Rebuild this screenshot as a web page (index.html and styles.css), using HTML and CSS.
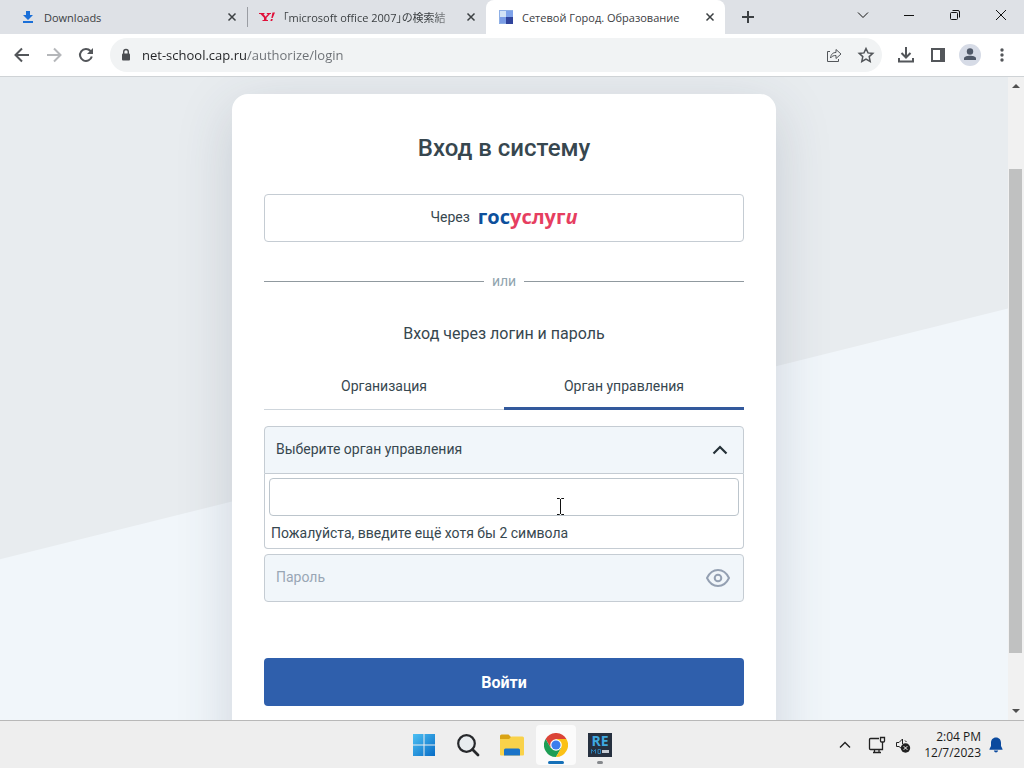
FILE: index.html
```html
<!DOCTYPE html>
<html lang="ru">
<head>
  <meta charset="UTF-8" />
  <meta name="viewport" content="width=device-width, initial-scale=1.0"/>
  <title>Сетевой Город. Образование</title>
  <link rel="stylesheet" href="styles.css">
</head>
<body>
  <header class="tabstrip">
    <div class="tab">
      <svg width="16" height="16" viewBox="0 0 16 16"><path fill="#1a6fd8" d="M6 2h4v4h3l-5 5-5-5h3zM3 12h10v2H3z"/></svg>
      <span class="tab-title">Downloads</span>
      <button class="tab-close" aria-label="Close"><svg width="16" height="16" viewBox="0 0 16 16"><path d="M4.500 4.500l7 7M11.500 4.500l-7 7"/></svg></button>
    </div>
    <div class="tab divided">
      <svg width="16" height="16" viewBox="0 0 16 16"><path fill="#e0103a" d="M0 4h5.500v1H4.500l2 2.700L9 5H7.800V4H12v1h-1L7.500 8.800V11H9v1H3.500v-1H5V8.800L1.500 5H0zM13.500 3.500H16L13.700 9h-1.400zM12 10h1.800l-.6 2h-1.800z"/></svg>
      <span class="tab-title faded">「microsoft office 2007」の検索結</span>
      <button class="tab-close" aria-label="Close"><svg width="16" height="16" viewBox="0 0 16 16"><path d="M4.500 4.500l7 7M11.500 4.500l-7 7"/></svg></button>
    </div>
    <div class="tab active">
      <svg width="16" height="16" viewBox="0 0 16 16"><path fill="#d3e3f6" d="M1 1h7v7H1z"/><path fill="#7fa3ea" d="M8 1h7v7H8z"/><path fill="#7b9de6" d="M1 8h7v7H1z"/><path fill="#30449c" d="M8 8h7v7H8z"/><path fill="none" stroke="#8fb0e6" d="M1.500 1v13.500H8M1 1.500h14"/></svg>
      <span class="tab-title">Сетевой Город. Образование</span>
      <button class="tab-close" aria-label="Close"><svg width="16" height="16" viewBox="0 0 16 16"><path d="M4.500 4.500l7 7M11.500 4.500l-7 7"/></svg></button>
    </div>
    <button class="new-tab" aria-label="New tab"><svg width="16" height="16" viewBox="0 0 16 16"><path d="M8 2v12M2 8h12"/></svg></button>
    <div class="window-controls">
      <button aria-label="Search tabs"><svg width="12" height="12" viewBox="0 0 12 12"><path d="M1 3.500l5 5 5-5"/></svg></button>
      <button aria-label="Minimize"><svg width="12" height="12" viewBox="0 0 12 12"><path d="M1 6.500h10"/></svg></button>
      <button aria-label="Restore"><svg width="12" height="12" viewBox="0 0 12 12"><rect x="1.500" y="3.500" width="7" height="7" rx="1"/><path d="M3.500 1.500H9a1.500 1.500 0 0 1 1.500 1.500v5.500"/></svg></button>
      <button aria-label="Close window"><svg width="12" height="12" viewBox="0 0 12 12"><path d="M1 1l10 10M11 1L1 11"/></svg></button>
    </div>
  </header>

  <nav class="toolbar">
    <button class="tool" aria-label="Back"><svg width="20" height="20" viewBox="0 0 20 20"><path d="M17 10H4M10 3.500L3.500 10l6.500 6.500"/></svg></button>
    <button class="tool" aria-label="Forward" disabled><svg width="20" height="20" viewBox="0 0 20 20"><path d="M3 10h13M10 3.500l6.500 6.500-6.500 6.500"/></svg></button>
    <button class="tool" aria-label="Reload"><svg width="20" height="20" viewBox="0 0 20 20"><path d="M15.800 11.500A6 6 0 1 1 14.500 6L16 7.500"/><path class="solid" d="M17 3v6h-6z"/></svg></button>
    <div class="omnibox">
      <svg width="16" height="16" viewBox="0 0 16 16"><rect x="4" y="6.500" width="8" height="7" rx="1" fill="#4a4d51"/><path d="M5.700 7V4.800a2.300 2.300 0 0 1 4.600 0V7" fill="none" stroke="#4a4d51" stroke-width="1.400"/></svg>
      <input class="url" type="text" aria-label="Address" value="net-school.cap.ru/authorize/login">
      <button class="tool thin" aria-label="Share"><svg width="18" height="18" viewBox="0 0 18 18"><path d="M5 5.500H2.500v10h11V13"/><path d="M5.500 12c.5-4 2.500-5.500 5.500-5.500V3.500L16 8l-5 4.500v-3c-2.500 0-4 .5-5.500 2.500z"/></svg></button>
      <button class="tool" aria-label="Bookmark"><svg width="18" height="18" viewBox="0 0 18 18"><path stroke-width="1.500" d="M9 2.500l2 4.400 4.800.5-3.600 3.200 1 4.800L9 13l-4.200 2.400 1-4.800-3.600-3.200 4.800-.5z"/></svg></button>
    </div>
    <button class="tool" aria-label="Downloads"><svg width="20" height="20" viewBox="0 0 20 20"><path d="M10 2v10M5.500 8l4.500 4.500L14.500 8M3 13v3.500h14V13"/></svg></button>
    <button class="tool" aria-label="Side panel"><svg width="20" height="20" viewBox="0 0 20 20"><path d="M4 4h12v12H4z"/><path class="solid" d="M12 3h5v14h-5z"/></svg></button>
    <button class="tool" aria-label="Profile"><svg width="22" height="22" viewBox="0 0 22 22"><circle cx="11" cy="11" r="11" fill="#d6dbe6"/><circle cx="11" cy="7.500" r="3.200" fill="#4f5868"/><path fill="#4f5868" d="M5 16v-1.500C5 12.500 8 11.700 11 11.700s6 .8 6 2.800V16z"/></svg></button>
    <button class="tool" aria-label="Menu"><svg width="20" height="20" viewBox="0 0 20 20"><g class="solid"><circle cx="10" cy="5" r="1.700"/><circle cx="10" cy="10" r="1.700"/><circle cx="10" cy="15" r="1.700"/></g></svg></button>
  </nav>

  <div class="viewport">
    <main class="page">
      <form class="card">
        <h1>Вход в систему</h1>
        <button type="button" class="gos-button">Через <span class="gos-logo">гос<span class="red">услуг<i>и</i></span></span></button>
        <div class="or">или</div>
        <h2>Вход через логин и пароль</h2>
        <div class="login-tabs" role="tablist">
          <button type="button" role="tab">Организация</button>
          <button type="button" role="tab" aria-selected="true">Орган управления</button>
        </div>
        <div class="field select-field">
          <select aria-label="Орган управления">
            <option>Выберите орган управления</option>
          </select>
          <svg width="16" height="16" viewBox="0 0 16 16"><path d="M1.500 11.500L8 5l6.500 6.500" fill="none" stroke="#263238" stroke-width="2.200"/></svg>
        </div>
        <div class="dropdown">
          <input type="text" id="org-search">
          <label for="org-search">Пожалуйста, введите ещё хотя бы 2 символа</label>
        </div>
        <div class="field password-field">
          <input type="password" placeholder="Пароль" aria-label="Пароль">
          <button type="button" aria-label="Показать пароль"><svg width="24" height="20" viewBox="0 0 24 20"><path d="M1 10C3.500 4.800 7.500 2 12 2s8.500 2.800 11 8c-2.500 5.200-6.500 8-11 8S3.500 15.200 1 10z"/><circle cx="12" cy="10" r="3.300"/></svg></button>
        </div>
        <button type="submit" class="submit">Войти</button>
      </form>
      <svg class="pointer" width="9" height="17" viewBox="0 0 9 17"><path d="M1 .5h2.500l1 1 1-1H8M4.500 1v15M1 16.500h2.500l1-1 1 1H8" fill="none" stroke="#111"/></svg>
    </main>
    <div class="scrollbar">
      <svg width="16" height="17" viewBox="0 0 16 17"><path d="M4 11l4-4 4 4z"/></svg>
      <div class="gap-above"></div>
      <div class="thumb"></div>
      <div class="gap-below"></div>
      <svg width="16" height="17" viewBox="0 0 16 17"><path d="M4 6l4 4 4-4z"/></svg>
    </div>
  </div>

  <footer class="taskbar">
    <div class="apps">
      <button aria-label="Start"><svg width="24" height="24" viewBox="0 0 24 24"><defs><linearGradient id="win" x1="0" y1="0" x2="24" y2="24" gradientUnits="userSpaceOnUse"><stop offset="0" stop-color="#50c4f5"/><stop offset="1" stop-color="#0468c4"/></linearGradient></defs><path fill="url(#win)" d="M1 1h10.500v10.500H1zM12.500 1H23v10.500H12.500zM1 12.500h10.500V23H1zM12.500 12.500H23V23H12.500z"/></svg></button>
      <button aria-label="Search"><svg width="24" height="24" viewBox="0 0 24 24"><circle cx="10.500" cy="10.500" r="8.300" fill="#e8ecef" stroke="#26282b" stroke-width="2.200"/><path d="M16.500 16.500l5.500 5.500" stroke="#26282b" stroke-width="2.800" stroke-linecap="round"/></svg></button>
      <button aria-label="Explorer"><svg width="26" height="24" viewBox="0 0 26 24"><path fill="#d9a315" d="M1 3q0-1.500 1.500-1.500h7L12 4v6H1z"/><path fill="#f9d24a" d="M1 6h9l2.500-2.500h11Q25 3.500 25 5v16.500q0 1-1 1H2q-1 0-1-1z"/><path fill="#1a73c8" d="M5 22.500V17q0-1.500 1.500-1.500h13q1.500 0 1.500 1.500v5.500z"/></svg></button>
      <button class="current" aria-label="Chrome"><svg width="24" height="24" viewBox="0 0 24 24"><path fill="#db4437" d="M12 6h10.400A12 12 0 0 0 1.600 6l5.200 9z"/><path fill="#1e9e55" d="M6.800 15L1.600 6A12 12 0 0 0 12 24l5.200-9z"/><path fill="#fbc116" d="M17.200 15L12 24A12 12 0 0 0 22.400 6H12z"/><circle cx="12" cy="12" r="5.800" fill="#fff"/><circle cx="12" cy="12" r="4.600" fill="#3b7ded"/></svg></button>
      <button class="running" aria-label="Remote"><span class="re-icon"><b>RE</b><svg width="18" height="5" viewBox="0 0 18 5"><path d="M.5 4.500v-4l2 2 2-2v4M7 .5h2.500v4H7z" fill="none" stroke="#2c7fb5"/><path d="M11 1h7v3h-7z" fill="#c5cbd3"/></svg></span></button>
    </div>
    <div class="tray">
      <button aria-label="Hidden icons"><svg width="12" height="12" viewBox="0 0 12 12"><path d="M1 8.500l5-5 5 5" fill="none" stroke="#222" stroke-width="1.400"/></svg></button>
      <button aria-label="Network"><svg width="18" height="18" viewBox="0 0 18 18"><path d="M11 2.500H2.500Q1.500 2.500 1.500 3.500v9q0 1 1 1h12V8M5 16.500h8M6.500 14v2M11 14v2M12.500 1.500h4V5q0 1-1 1h-2q-1 0-1-1zM14.500 6v7.500" fill="none" stroke="#222" stroke-width="1.300"/></svg></button>
      <button aria-label="Volume muted"><svg width="18" height="18" viewBox="0 0 18 18"><path d="M7.500 12.500L5 10.500H2.500v-4H5L8.500 3v5M11 4.500l1.500 1.500" fill="none" stroke="#222"/><circle cx="11.500" cy="12" r="4.700" fill="#222"/><path d="M9.700 10.200l3.600 3.600M13.300 10.200l-3.600 3.600" stroke="#fff"/></svg></button>
      <div class="clock"><time>2:04 PM</time><time>12/7/2023</time></div>
      <button aria-label="Notifications"><svg width="16" height="18" viewBox="0 0 16 18"><path fill="#0b4a9e" d="M8 1.500c3.200 0 5 2.300 5 5.200V10l1.500 3v.8h-13V13L3 10V6.700c0-2.900 1.800-5.200 5-5.200zM5.800 14.600h4.400Q9.600 16.500 8 16.500t-2.200-1.900z"/></svg></button>
    </div>
  </footer>
</body>
</html>
```
FILE: styles.css
```css
* {
  box-sizing: border-box;
}
body {
  margin: 0;
  height: 100vh;
  display: flex;
  flex-direction: column;
  overflow: hidden;
  font-family: "Open Sans", "Noto Sans CJK JP", sans-serif;
  font-size: 12px;
  color: #3c4043;
}
button {
  display: flex;
  align-items: center;
  justify-content: center;
  padding: 0;
  border: 0;
  background: none;
  font: inherit;
  color: inherit;
}
svg {
  flex: none;
}

/* browser tabs */
.tabstrip {
  display: flex;
  flex: none;
  height: 34px;
  padding-left: 8px;
  background: #dee1e6;
}
.tab {
  display: flex;
  flex: 0 1 239px;
  align-items: center;
  gap: 8px;
  min-width: 0;
  padding: 0 7px 0 12px;
}
.tab.divided {
  background: linear-gradient(#9a9da3, #9a9da3) 0 50% / 1px 20px no-repeat;
}
.tab.active {
  background: #fff;
  border-radius: 8px 8px 0 0;
}
.tab-title {
  flex: 1;
  overflow: hidden;
  font-size: 11px;
  white-space: nowrap;
}
.tab-title.faded {
  font-feature-settings: "palt";
  mask-image: linear-gradient(to right, #000 85%, rgba(0, 0, 0, 0.3));
}
.tab-close svg {
  fill: none;
  stroke: #3c4043;
  stroke-width: 1.5;
}
.new-tab {
  width: 46px;
}
.new-tab svg {
  stroke: #3c4043;
  stroke-width: 2;
}
.window-controls {
  display: flex;
  height: 29px;
  margin-left: auto;
}
.window-controls button {
  width: 46px;
}
.window-controls svg {
  fill: none;
  stroke: #111;
}

/* toolbar */
.toolbar {
  display: flex;
  flex: none;
  align-items: center;
  height: 43px;
  padding: 0 6px;
  background: #fff;
  border-bottom: 1px solid #cfd3d6;
}
.tool {
  width: 32px;
  height: 32px;
}
.tool svg {
  fill: none;
  stroke: #53565a;
  stroke-width: 2;
}
.tool.thin svg {
  stroke-width: 1;
}
.tool:disabled svg {
  stroke: #b5b7ba;
}
.tool .solid {
  fill: #53565a;
  stroke: none;
}
.tool circle {
  stroke: none;
}
.tool path[fill] {
  stroke: none;
}
.omnibox {
  display: flex;
  flex: 1;
  align-items: center;
  height: 34px;
  margin: 0 8px;
  padding-left: 8px;
  background: #f1f3f4;
  border-radius: 17px;
}
.url {
  flex: 1;
  min-width: 0;
  margin-left: 8px;
  padding: 0;
  border: 0;
  outline: 0;
  font: 13px "Open Sans", sans-serif;
  /* host is dark, path is grey */
  background: linear-gradient(to right, #202124 105px, #6a6e73 105px);
  background-clip: text;
  -webkit-text-fill-color: transparent;
}

/* page */
.viewport {
  display: flex;
  flex: 1;
  min-height: 0;
}
.page {
  position: relative;
  flex: 1;
  overflow: hidden;
  padding-top: 17px;
  background: #f1f6fa;
  font-family: Roboto, sans-serif;
  font-size: 14px;
}
.page::before {
  content: "";
  position: absolute;
  inset: 0;
  background: #e8ecef;
  clip-path: polygon(0 0, 100% 0, 100% 36%, 0 75%);
}
.card {
  position: relative;
  max-width: 544px;
  margin: 0 auto;
  padding: 40px 32px 80px;
  background: #fff;
  border-radius: 16px;
  box-shadow: 0 16px 56px rgba(50, 60, 90, 0.18);
  color: #37474f;
}
h1 {
  margin: 0 0 32px;
  font-size: 24px;
  line-height: 28px;
  font-weight: 500;
  text-align: center;
}
.gos-button {
  gap: 8px;
  width: 100%;
  height: 48px;
  padding-bottom: 2px;
  border: 1px solid #c5ccd3;
  border-radius: 4px;
}
.gos-logo {
  font: bold 20px/24px "Open Sans", sans-serif;
  color: #0d4f9c;
}
.gos-logo .red {
  color: #e63e60;
}
.or {
  display: flex;
  align-items: center;
  gap: 8px;
  margin: 29px 0 31px;
  line-height: 20px;
  color: #90a4ae;
}
.or::before,
.or::after {
  content: "";
  flex: 1;
  height: 1px;
  background: #90999f;
}
h2 {
  margin: 0 0 16px;
  font-size: 16px;
  line-height: 24px;
  font-weight: 400;
  text-align: center;
}
.login-tabs {
  display: flex;
  margin-bottom: 16px;
}
.login-tabs button {
  flex: 1;
  height: 48px;
  box-shadow: inset 0 -1px #cfd6dc;
}
.login-tabs button[aria-selected="true"] {
  box-shadow: inset 0 -3px #33599c;
}
.field {
  display: flex;
  align-items: center;
  height: 48px;
  background: #f1f6fa;
  border: 1px solid #c5ccd3;
  border-radius: 4px;
}
.field select,
.field input {
  flex: 1;
  min-width: 0;
  height: 100%;
  padding: 0 11px 2px;
  border: 0;
  outline: 0;
  appearance: none;
  background: none;
  font: inherit;
  color: inherit;
}
.field input::placeholder {
  color: #99a6b5;
}
.select-field {
  padding-right: 15px;
  border-radius: 4px 4px 0 0;
}
.dropdown {
  margin-bottom: 5px;
  padding: 4px;
  border: 1px solid #c5ccd3;
  border-top: 0;
  border-radius: 0 0 4px 4px;
}
.dropdown input {
  display: block;
  width: 100%;
  height: 38px;
  padding: 0 8px;
  border: 1px solid #bcc5cc;
  border-radius: 4px;
  font: inherit;
}
.dropdown label {
  display: block;
  padding: 7px 2px 1px;
  line-height: 20px;
}
.password-field {
  padding-right: 13px;
}
.password-field svg {
  fill: none;
  stroke: #94a0b2;
  stroke-width: 2;
}
.submit {
  width: 100%;
  height: 48px;
  margin-top: 56px;
  background: #2f5fac;
  border-radius: 4px;
  color: #fff;
  font-size: 16px;
  font-weight: 700;
}
/* mouse pointer */
.pointer {
  position: absolute;
  left: 556px;
  top: 421px;
}
.scrollbar {
  display: flex;
  flex-direction: column;
  width: 16px;
  background: #f1f1f1;
}
.scrollbar svg {
  fill: #505050;
}
.gap-above {
  flex: 75;
}
.thumb {
  flex: 484;
  margin: 0 2px 0 1px;
  background: #c0c1c1;
}
.gap-below {
  flex: 50;
}

/* taskbar */
.taskbar {
  display: grid;
  grid-template-columns: 1fr auto 1fr;
  flex: none;
  height: 48px;
  background: #eeeeee;
  border-top: 1px solid #b8b8b8;
  color: #1b1b1b;
}
.apps {
  display: flex;
  grid-column: 2;
  align-items: center;
  gap: 4px;
}
.apps button {
  position: relative;
  width: 40px;
  height: 40px;
  border-radius: 4px;
}
.apps .current {
  background: #fbfbfb;
}
.apps .current::after,
.apps .running::after {
  content: "";
  position: absolute;
  bottom: 1px;
  width: 16px;
  height: 3px;
  border-radius: 2px;
  background: #1570b8;
}
.apps .running::after {
  width: 6px;
  background: #85888c;
}
.re-icon {
  display: flex;
  flex-direction: column;
  align-items: center;
  width: 24px;
  height: 24px;
  background: #26303f;
  color: #3fa9e0;
  font: 14px/16px "Open Sans", sans-serif;
}
.tray {
  display: flex;
  align-items: center;
  justify-content: flex-end;
  padding-right: 20px;
}
.tray button {
  width: 26px;
  height: 40px;
}
.tray button:first-child {
  width: 38px;
}
.tray button:last-child {
  width: 16px;
}
.clock {
  display: flex;
  flex-direction: column;
  margin: 0 7px 0 8px;
  line-height: 16px;
  text-align: right;
}
```
